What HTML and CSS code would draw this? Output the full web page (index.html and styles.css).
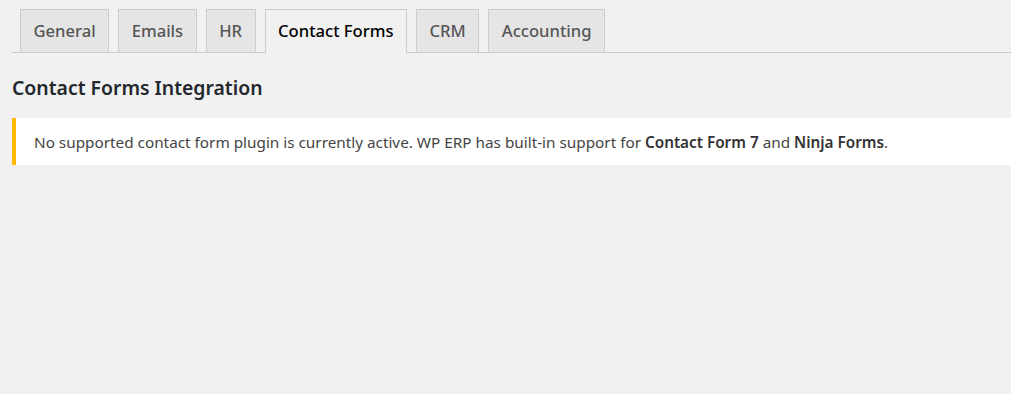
FILE: index.html
```html
<!DOCTYPE html>
<html lang="en">

<head>
    <meta charset="UTF-8">
    <meta name="viewport" content="width=device-width, initial-scale=1.0">
    <title>Settings - Contact Forms</title>
    <link rel="stylesheet" href="styles.css">
</head>

<body>
    <div class="wrap">
        <!-- Settings tabs -->
        <nav class="nav-tab-wrapper">
            <a href="#" class="nav-tab">General</a>
            <a href="#" class="nav-tab">Emails</a>
            <a href="#" class="nav-tab">HR</a>
            <a href="#" class="nav-tab nav-tab-active">Contact Forms</a>
            <a href="#" class="nav-tab">CRM</a>
            <a href="#" class="nav-tab">Accounting</a>
        </nav>

        <h2 class="section-title">Contact Forms Integration</h2>

        <div class="notice notice-warning">
            <p>No supported contact form plugin is currently active. WP ERP has built-in support for <strong>Contact Form 7</strong> and <strong>Ninja Forms</strong>.</p>
        </div>
    </div>
</body>

</html>
```
FILE: styles.css
```css
body {
    margin: 0;
    background-color: #f1f1f1;
    font-family: "Noto Sans", "Open Sans", sans-serif;
    color: #444;
}

.wrap {
    padding: 9px 0 0 12px;
}

.nav-tab-wrapper {
    display: flex;
    align-items: flex-end;
    border-bottom: 1px solid #ccc;
}

.nav-tab {
    display: block;
    margin-left: 9px;
    margin-bottom: -1px;
    padding: 0 12.5px;
    height: 42px;
    line-height: 42px;
    font-size: 16.6px;
    font-weight: 500;
    color: #555;
    text-decoration: none;
    background-color: #e5e5e5;
    border: 1px solid #ccc;
}

.nav-tab:first-child {
    margin-left: 8px;
}

.nav-tab-active {
    background-color: #f1f1f1;
    border-bottom-color: #f1f1f1;
    color: #000;
}

.section-title {
    margin: 21px 0 17px;
    font-size: 19.4px;
    font-weight: 600;
    color: #23282d;
}

.notice {
    background: #fff;
    border-left: 4px solid #ffb900;
    box-shadow: 0 1px 1px rgba(0, 0, 0, 0.08);
    padding: 0 18px;
}

.notice p {
    margin: 0;
    padding: 13px 0 11px;
    font-size: 15.3px;
    line-height: 23px;
}

.notice strong {
    font-weight: 600;
    color: #333;
}
```
